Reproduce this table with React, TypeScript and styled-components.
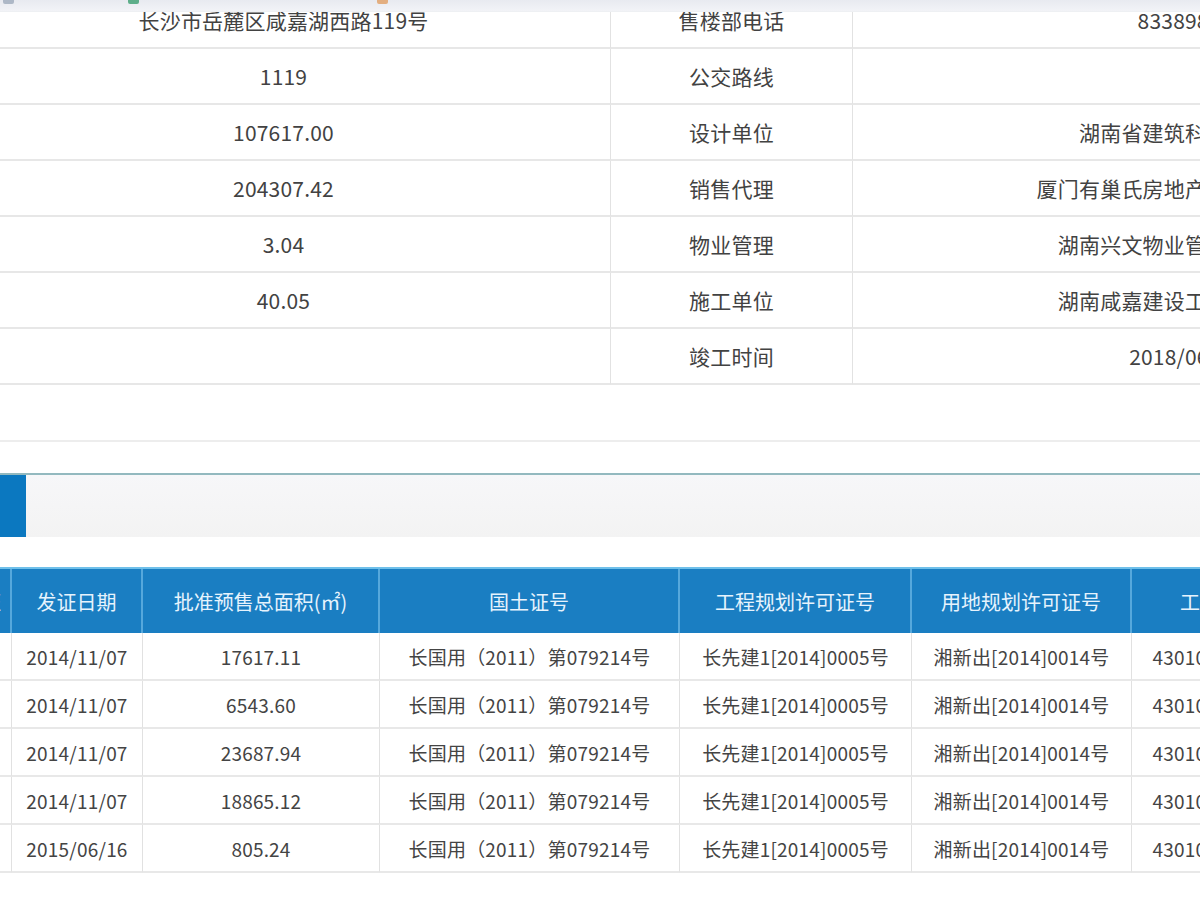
import React from "react";
import styled, { createGlobalStyle } from "styled-components";

const Global = createGlobalStyle`
  html, body { margin: 0; padding: 0; background: #fff; }
  body {
    width: 1200px; height: 900px; overflow: hidden;
    font-family: "Noto Sans CJK SC", "Noto Sans", sans-serif;
    color: #444;
  }
`;

const Page = styled.div`
  width: 1200px;
  height: 900px;
  overflow: hidden;
  display: flex;
  flex-direction: column;
`;

const TopStrip = styled.div`
  flex: none;
  height: 11px;
  background: linear-gradient(#e8eaf0, #f2f3f7);
  display: flex;
  align-items: flex-start;
  border-bottom: 1px solid #eef0f3;
`;

const StripMark = styled.span<{ $c: string; $gap: number }>`
  margin-left: ${(p) => p.$gap}px;
  width: 11px;
  height: 4px;
  background: ${(p) => p.$c};
  border-radius: 0 0 2px 2px;
  opacity: 0.75;
`;

const InfoClip = styled.div`
  flex: none;
  overflow: hidden;
`;

const InfoGrid = styled.div`
  display: grid;
  grid-template-columns: 654px 242px 664px;
  margin-left: -43px;
  margin-top: -19px;
  font-size: 21px;
`;

const InfoCell = styled.div<{ $last?: boolean }>`
  box-sizing: border-box;
  height: 56px;
  display: flex;
  align-items: center;
  justify-content: center;
  white-space: nowrap;
  overflow: hidden;
  color: #424242;
  letter-spacing: 0.2px;
  border-bottom: 2px solid #e7e7e7;
  border-right: ${(p) => (p.$last ? "none" : "1px solid #e2e2e2")};
`;

const BlankRow = styled.div`
  flex: none;
  height: 55px;
  border-bottom: 2px solid #ededed;
`;

const SectionBar = styled.div`
  flex: none;
  margin-top: 31px;
  height: 62px;
  border-top: 2px solid #93b9bf;
  background: linear-gradient(#f7f7f9, #f3f3f3);
  display: flex;
`;

const BarAccent = styled.div`
  width: 26px;
  background: #0b78c0;
`;

const SaleTable = styled.div`
  flex: none;
  margin-top: 30px;
  display: grid;
  grid-template-columns: 120px 131px 237px 300px 232px 220px 256px;
  margin-left: -108px;
  border-top: 2px solid #6fc0ea;
`;

const HeadCell = styled.div<{ $last?: boolean }>`
  box-sizing: border-box;
  height: 64px;
  display: flex;
  align-items: center;
  justify-content: center;
  white-space: nowrap;
  overflow: hidden;
  background: #1a7ec2;
  color: #e6f3fd;
  font-size: 20px;
  border-right: ${(p) => (p.$last ? "none" : "2px solid #56a8dc")};
`;

const DataCell = styled.div<{ $last?: boolean }>`
  box-sizing: border-box;
  height: 48px;
  display: flex;
  align-items: center;
  justify-content: center;
  white-space: nowrap;
  overflow: hidden;
  color: #444;
  font-size: 19px;
  letter-spacing: 0.2px;
  border-bottom: 2px solid #e8e8e8;
  border-right: ${(p) => (p.$last ? "none" : "1px solid #e1e1e1")};
`;

const infoRows: [string, string, string][] = [
  ["长沙市岳麓区咸嘉湖西路119号", "售楼部电话", "83389888"],
  ["1119", "公交路线", ""],
  ["107617.00", "设计单位", "湖南省建筑科学研究院"],
  ["204307.42", "销售代理", "厦门有巢氏房地产代理有限公司"],
  ["3.04", "物业管理", "湖南兴文物业管理有限公司"],
  ["40.05", "施工单位", "湖南咸嘉建设工程有限公司"],
  ["", "竣工时间", "2018/06/30"],
];

const heads: string[] = [
  "预售许可证",
  "发证日期",
  "批准预售总面积(㎡)",
  "国土证号",
  "工程规划许可证号",
  "用地规划许可证号",
  "工程施工许可证号",
];

const saleRows: [string, string, string][] = [
  ["2014/11/07", "17617.11", "43010420141027010101"],
  ["2014/11/07", "6543.60", "43010420141027010101"],
  ["2014/11/07", "23687.94", "43010420141027010101"],
  ["2014/11/07", "18865.12", "43010420141027010101"],
  ["2015/06/16", "805.24", "43010420141027010101"],
];

export default function App() {
  return (
    <Page>
      <Global />
      <TopStrip>
        <StripMark $c="#9aa7b8" $gap={3} />
        <StripMark $c="#2f9a67" $gap={114} />
        <StripMark $c="#e09a5a" $gap={238} />
      </TopStrip>
      <InfoClip>
        <InfoGrid>
          {infoRows.map((r, i) => (
            <React.Fragment key={i}>
              <InfoCell>{r[0]}</InfoCell>
              <InfoCell>{r[1]}</InfoCell>
              <InfoCell $last>{r[2]}</InfoCell>
            </React.Fragment>
          ))}
        </InfoGrid>
      </InfoClip>
      <BlankRow />
      <SectionBar>
        <BarAccent />
      </SectionBar>
      <SaleTable>
        {heads.map((h, i) => (
          <HeadCell key={i} $last={i === heads.length - 1}>
            {h}
          </HeadCell>
        ))}
        {saleRows.map((r, i) => (
          <React.Fragment key={i}>
            <DataCell>预{i + 1}</DataCell>
            <DataCell>{r[0]}</DataCell>
            <DataCell>{r[1]}</DataCell>
            <DataCell>长国用（2011）第079214号</DataCell>
            <DataCell>长先建1[2014]0005号</DataCell>
            <DataCell>湘新出[2014]0014号</DataCell>
            <DataCell $last>{r[2]}</DataCell>
          </React.Fragment>
        ))}
      </SaleTable>
    </Page>
  );
}
